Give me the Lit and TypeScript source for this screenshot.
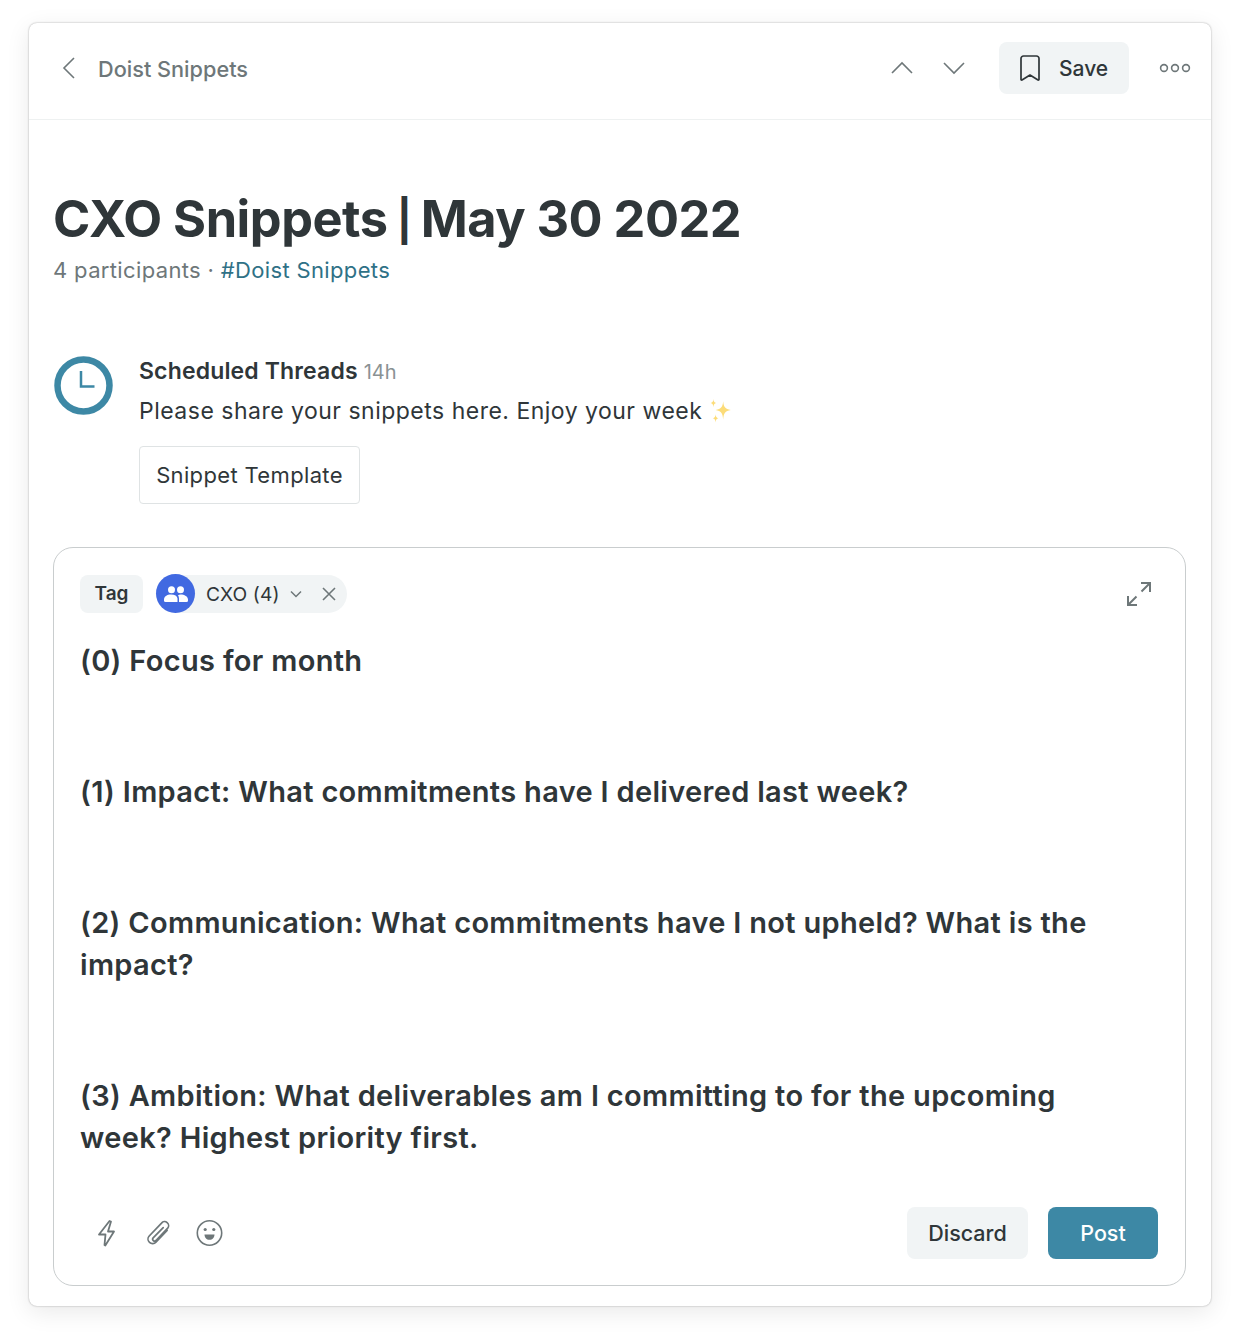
import { LitElement, html, css, svg } from 'lit';
import { customElement } from 'lit/decorators.js';

const icon = (w: number, h: number, body: unknown) => html`
  <svg width=${w} height=${h} viewBox="0 0 ${w} ${h}" fill="none" stroke="currentColor">${body}</svg>
`;

@customElement('app-root')
export class AppRoot extends LitElement {
  static styles = css`
    :host {
      display: block;
      height: 1341px;
      padding: 23px 29px 0;
      box-sizing: border-box;
      font-family: Inter, 'Noto Sans', sans-serif;
      color: #2f3639;
      background: #fff;
    }

    .card {
      height: 1283px;
      box-sizing: border-box;
      border-radius: 8px;
      background: #fff;
      box-shadow: 0 0 2px rgba(0, 0, 0, 0.35), 0 6px 24px rgba(0, 0, 0, 0.09);
      display: flex;
      flex-direction: column;
    }

    .header {
      flex: none;
      height: 97px;
      box-sizing: border-box;
      border-bottom: 1px solid #eef1f1;
      display: flex;
      align-items: center;
      padding-left: 31px;
      padding-right: 20px;
      padding-bottom: 4px;
      color: #6e7779;
    }

    .back {
      display: flex;
      margin-right: 22px;
      margin-top: -2px;
    }

    .channel {
      font-size: 21.7px;
      font-weight: 500;
      flex: 1;
      margin-top: -1px;
    }

    .nav {
      display: flex;
      gap: 28px;
      margin-right: 33px;
      margin-top: -2px;
    }

    .nav svg {
      display: block;
    }

    .save {
      width: 130px;
      height: 52px;
      margin-top: -2px;
      border-radius: 8px;
      background: #f1f4f5;
      color: #2f3639;
      display: flex;
      align-items: center;
      box-sizing: border-box;
      padding-left: 19px;
      gap: 17px;
      font-size: 21px;
      font-weight: 500;
    }

    .more {
      display: flex;
      margin-left: 30px;
      margin-top: -3px;
    }

    .body {
      flex: 1;
      min-height: 0;
      display: flex;
      flex-direction: column;
      padding: 0 25px 20px 24px;
    }

    h1 {
      margin: 66px 0 0;
      font-size: 50.5px;
      line-height: 66px;
      font-weight: 700;
      letter-spacing: -0.5px;
    }

    .pipe {
      font-size: 41px;
      line-height: 1;
      vertical-align: 2px;
    }

    .meta {
      margin-top: 3px;
      font-size: 22px;
      line-height: 30px;
      color: #6e7779;
      letter-spacing: 0.35px;
    }

    .meta a {
      color: #2f7186;
    }

    .message {
      margin-top: 71px;
      display: flex;
      gap: 25px;
    }

    .avatar {
      display: block;
      width: 60px;
      height: 60px;
      margin-left: 1px;
    }

    .author {
      font-size: 23px;
      line-height: 30px;
      font-weight: 600;
      letter-spacing: 0.15px;
    }

    .time {
      font-size: 20px;
      font-weight: 400;
      letter-spacing: 0;
      color: #8a9294;
    }

    .text {
      margin-top: 9px;
      font-size: 23px;
      line-height: 30px;
      letter-spacing: 0.49px;
      display: flex;
      align-items: center;
      gap: 6px;
    }

    .template {
      margin-top: 20px;
      width: 221px;
      height: 58px;
      box-sizing: border-box;
      border: 1px solid #dfe3e4;
      border-radius: 4px;
      display: flex;
      align-items: center;
      justify-content: center;
      font-size: 22px;
      letter-spacing: 0.35px;
    }

    .composer {
      margin-top: 43px;
      flex: 1;
      min-height: 0;
      border: 1.5px solid #c9cdce;
      border-radius: 20px;
      box-sizing: border-box;
      padding: 26px 27px 26px 26px;
      display: flex;
      flex-direction: column;
    }

    .tags {
      display: flex;
      align-items: center;
      gap: 13px;
      height: 39px;
    }

    .tag {
      width: 63px;
      height: 38px;
      border-radius: 8px;
      background: #f1f4f5;
      display: flex;
      align-items: center;
      justify-content: center;
      font-size: 19px;
      font-weight: 600;
    }

    .chip {
      height: 38px;
      width: 191px;
      border-radius: 19px;
      background: #f1f4f5;
      display: flex;
      align-items: center;
      font-size: 19.2px;
      letter-spacing: 0.1px;
    }

    .chip-avatar {
      width: 39px;
      height: 39px;
      border-radius: 50%;
      background: #4169e1;
      display: flex;
      align-items: center;
      justify-content: center;
      margin-right: 11px;
      flex: none;
    }

    .chip-chevron {
      display: flex;
      color: #6e7779;
      margin-left: 10px;
    }

    .chip-close {
      display: flex;
      color: #6e7779;
      margin-left: 20px;
    }

    .expand {
      margin-left: auto;
      display: flex;
      color: #6e7779;
      margin-right: 6px;
    }

    .prompts {
      flex: 1;
      margin-top: 27px;
      padding-right: 40px;
      font-size: 29px;
      line-height: 42px;
      font-weight: 600;
      letter-spacing: 0.32px;
    }

    .prompts p {
      margin: 0 0 89px;
    }

    .prompts p:last-child {
      margin-bottom: 0;
    }

    .toolbar {
      display: flex;
      align-items: center;
      color: #6e7779;
    }

    .tools {
      display: flex;
      gap: 25px;
      margin-left: 12px;
      flex: 1;
      align-items: center;
    }

    .tools svg {
      display: block;
    }

    .btn {
      height: 52px;
      border-radius: 8px;
      display: flex;
      align-items: center;
      justify-content: center;
      font-size: 21.5px;
      font-weight: 500;
      box-sizing: border-box;
    }

    .discard {
      width: 121px;
      background: #f1f4f5;
      color: #2f3639;
      margin-right: 20px;
    }

    .post {
      width: 110px;
      background: #3d88a5;
      color: #fff;
    }
  `;

  render() {
    return html`
      <div class="card">
        <div class="header">
          <span class="back">
            ${icon(16, 24, svg`<path d="M14 2 4 12l10 10" stroke-width="1.6"/>`)}
          </span>
          <span class="channel">Doist Snippets</span>
          <div class="nav">
            ${icon(24, 14, svg`<path d="M2 12 12 2l10 10" stroke-width="1.6"/>`)}
            ${icon(24, 14, svg`<path d="M2 2l10 10L22 2" stroke-width="1.6"/>`)}
          </div>
          <div class="save">
            ${icon(24, 28, svg`<path d="M3 4.500A2.500 2.500 0 0 1 5.500 2h13A2.500 2.500 0 0 1 21 4.500V25.500a.6.6 0 0 1-1 .45L12 21l-8 4.950a.6.6 0 0 1-1-.45Z" stroke-width="1.7" stroke-linejoin="round"/>`)}
            Save
          </div>
          <span class="more">
            ${icon(32, 12, svg`
              <circle cx="5" cy="6" r="3.400" stroke-width="1.600"/>
              <circle cx="16" cy="6" r="3.400" stroke-width="1.600"/>
              <circle cx="27" cy="6" r="3.400" stroke-width="1.600"/>
            `)}
          </span>
        </div>
        <div class="body">
          <h1>CXO Snippets<span class="pipe"> | </span>May 30 2022</h1>
          <div class="meta">4 participants · <a>#Doist Snippets</a></div>
          <div class="message">
            <svg class="avatar" viewBox="0 0 60 60" fill="none">
              <circle cx="29.500" cy="29.500" r="26" stroke="#3d88a5" stroke-width="6.500"/>
              <path d="M27 15v15.500h13.500" stroke="#3d88a5" stroke-width="2.500"/>
            </svg>
            <div>
              <div class="author">Scheduled Threads <span class="time">14h</span></div>
              <div class="text">
                Please share your snippets here. Enjoy your week
                <svg width="26" height="26" viewBox="0 0 24 24" fill="#fcdc78">
                  <path d="M14 3c.4 5 1.800 7.200 7 8-5.200.8-6.600 3-7 9-.4-6-1.800-8.200-7-9 5.200-.8 6.600-3 7-8Z"/>
                  <path d="M5 1c.2 2.400.8 3.200 2.500 3.600C5.800 5 5.200 6 5 8.500 4.800 6 4.200 5 2.500 4.600 4.200 4.200 4.800 3.400 5 1Z"/>
                  <path d="M7 15c.2 2.400.8 3.200 2.500 3.600C7.800 19 7.200 20 7 22.500 6.800 20 6.200 19 4.500 18.600 6.200 18.200 6.800 17.400 7 15Z"/>
                </svg>
              </div>
              <div class="template">Snippet Template</div>
            </div>
          </div>
          <div class="composer">
            <div class="tags">
              <div class="tag">Tag</div>
              <div class="chip">
                <span class="chip-avatar">
                  <svg width="24" height="16" viewBox="0 0 24 16" fill="#fff">
                    <circle cx="7.500" cy="3.700" r="3.500"/>
                    <circle cx="16.500" cy="3.700" r="3.500"/>
                    <path d="M0 13.500C0 10.500 3 8.500 7 8.500s6 1.500 6.500 4V16H1.500A1.500 1.500 0 0 1 0 14.500Z"/>
                    <path d="M15 16v-3.500c0-1.200-.4-2.300-1-3.200.8-.5 1.600-.8 2.500-.8 4 0 7.500 2 7.500 5v1a1.500 1.500 0 0 1-1.500 1.500Z"/>
                  </svg>
                </span>
                CXO (4)
                <span class="chip-chevron">
                  ${icon(12, 8, svg`<path d="M1 1.500l5 5 5-5" stroke-width="1.500"/>`)}
                </span>
                <span class="chip-close">
                  ${icon(14, 14, svg`<path d="M1 1l12 12M13 1 1 13" stroke-width="1.600"/>`)}
                </span>
              </div>
              <span class="expand">
                ${icon(26, 26, svg`
                  <path d="M15 2h9v9M24 2l-8.500 8.500" stroke-width="2"/>
                  <path d="M11 24H2v-9M2 24l8.500-8.500" stroke-width="2"/>
                `)}
              </span>
            </div>
            <div class="prompts">
              <p>(0) Focus for month</p>
              <p>(1) Impact: What commitments have I delivered last week?</p>
              <p>(2) Communication: What commitments have I not upheld? What is the impact?</p>
              <p>(3) Ambition: What deliverables am I committing to for the upcoming week? Highest priority first.</p>
            </div>
            <div class="toolbar">
              <div class="tools">
                ${icon(27, 28, svg`<path transform="translate(2 0)" d="M15.500 2 5 15.500h6.500L10.500 26l.8.500L20 12.500h-6l3-10Z" stroke-width="1.800" stroke-linejoin="round"/>`)}
                ${icon(27, 28, svg`<path transform="translate(-1.500 -1.500) scale(1.120)" d="M22 11.500 12 22a4 4 0 0 1-6-5.500L17 5a3.500 3.500 0 0 1 5.500 4.500L12 20.500a1.700 1.700 0 0 1-2.500-2.300L18.500 9" stroke-width="1.500" stroke-linecap="round"/>`)}
                <svg width="27" height="28" viewBox="0 0 27 28" fill="none">
                  <circle cx="13.500" cy="14" r="12.200" stroke="currentColor" stroke-width="1.600"/>
                  <circle cx="9.200" cy="10.500" r="1.600" fill="currentColor"/>
                  <circle cx="17.800" cy="10.500" r="1.600" fill="currentColor"/>
                  <path d="M8.500 15.500h10c0 3-2 5.300-5 5.300s-5-2.300-5-5.300Z" fill="currentColor"/>
                </svg>
              </div>
              <div class="btn discard">Discard</div>
              <div class="btn post">Post</div>
            </div>
          </div>
        </div>
      </div>
    `;
  }
}
